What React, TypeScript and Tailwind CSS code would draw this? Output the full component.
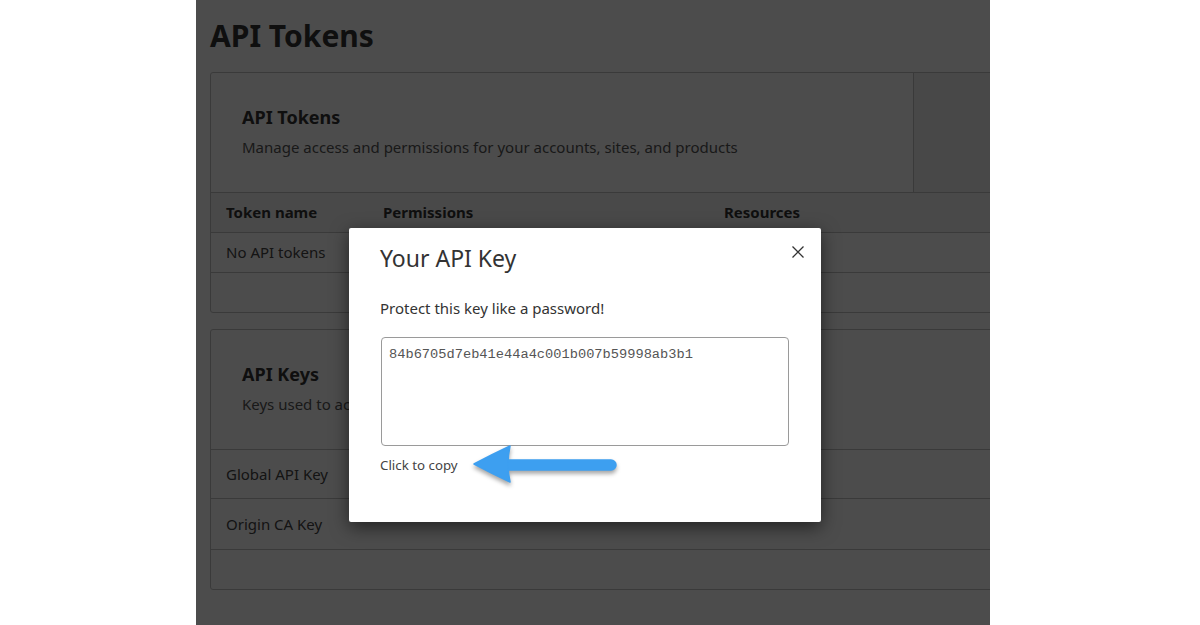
import React from "react";

function Arrow() {
  return (
    <svg
      width="150"
      height="42"
      viewBox="0 0 150 42"
      className="absolute left-[91px] top-1/2 -translate-y-1/2 overflow-visible"
      style={{ filter: "drop-shadow(0px 3px 2px rgba(0,0,0,0.35))" }}
    >
      <line x1="36" y1="21" x2="140" y2="21" stroke="#3d9ff0" strokeWidth="11.5" strokeLinecap="round" />
      <path d="M3 20 Q 22 10 39 2 Q 35 20 39 38 Q 22 30 3 20 Z" fill="#3d9ff0" stroke="#3d9ff0" strokeWidth="1.5" strokeLinejoin="round" />
    </svg>
  );
}

export default function App() {
  return (
    <div
      className="flex h-[625px] w-full overflow-hidden bg-white"
      style={{ fontFamily: '"Noto Sans", "Open Sans", sans-serif' }}
    >
      <div className="w-[196px] shrink-0" />
      <div className="relative h-full w-[794px] shrink-0 overflow-hidden bg-white">
        <div className="pl-[14px] pt-[18px]">
          <h1 className="text-[30px] font-bold leading-[35px] text-[#333]">API Tokens</h1>

          {/* Card 1 */}
          <div className="mt-[19px] w-[900px] rounded-[3px] border border-[#c4c4c4]">
            <div className="flex h-[120px] border-b border-[#c4c4c4]">
              <div className="w-[703px] border-r border-[#c4c4c4] pl-[31px] pt-[32px]">
                <h2 className="text-[18px] font-bold leading-[24px] text-[#333]">API Tokens</h2>
                <p className="mt-[7px] text-[15px] leading-[22px] text-[#555]">
                  Manage access and permissions for your accounts, sites, and products
                </p>
              </div>
              <div className="flex-1 bg-[#f2f2f2]" />
            </div>
            <div className="grid h-[40px] grid-cols-[157px_341px_1fr] items-center border-b border-[#c4c4c4] bg-[#f6f6f6] text-[15px] font-bold text-[#333]">
              <div className="pl-[15px]">Token name</div>
              <div className="pl-[15px]">Permissions</div>
              <div className="pl-[15px]">Resources</div>
            </div>
            <div className="flex h-[40px] items-center border-b border-[#c4c4c4] pl-[15px] text-[15px] text-[#444]">
              No API tokens
            </div>
            <div className="h-[39px]" />
          </div>

          {/* Card 2 */}
          <div className="mt-[16px] w-[900px] rounded-[3px] border border-[#c4c4c4]">
            <div className="h-[120px] border-b border-[#c4c4c4] pl-[31px] pt-[32px]">
              <h2 className="text-[18px] font-bold leading-[24px] text-[#333]">API Keys</h2>
              <p className="mt-[7px] text-[15px] leading-[22px] text-[#555]">
                Keys used to access Cloudflare APIs
              </p>
            </div>
            <div className="flex h-[49px] items-center border-b border-[#c4c4c4] pl-[15px] text-[15px] text-[#444]">
              Global API Key
            </div>
            <div className="flex h-[51px] items-center border-b border-[#c4c4c4] pl-[15px] text-[15px] text-[#444]">
              Origin CA Key
            </div>
            <div className="h-[39px]" />
          </div>
        </div>

        {/* Backdrop */}
        <div className="absolute inset-0 bg-black/70" />

        {/* Modal */}
        <div className="absolute left-[153px] top-[228px] h-[294px] w-[472px] rounded-[2px] bg-white px-[31px] pt-[14px] shadow-[0_5px_18px_rgba(0,0,0,0.55)]">
          <button className="absolute right-[17px] top-[18px] h-[12px] w-[12px]" aria-label="Close">
            <svg width="12" height="12" viewBox="0 0 12 12">
              <path d="M0.5 0.5 L11.5 11.5 M11.5 0.5 L0.5 11.5" stroke="#333" strokeWidth="1.3" />
            </svg>
          </button>
          <h3 className="text-[23px] font-normal leading-[32px] text-[#333]">Your API Key</h3>
          <p className="mt-[23px] text-[15px] leading-[22px] text-[#333]">Protect this key like a password!</p>
          <div
            className="ml-px mt-[18px] h-[109px] w-[408px] rounded-[4px] border border-[#9a9a9a] px-[7px] pt-[7px] text-[13.7px] text-[#555]"
            style={{ fontFamily: '"Liberation Mono", "Courier New", monospace' }}
          >
            84b6705d7eb41e44a4c001b007b59998ab3b1
          </div>
          <div className="relative mt-[10px] flex h-[18px] items-center">
            <span className="text-[13.3px] leading-[18px] text-[#444]">Click to copy</span>
            <Arrow />
          </div>
        </div>
      </div>
    </div>
  );
}
